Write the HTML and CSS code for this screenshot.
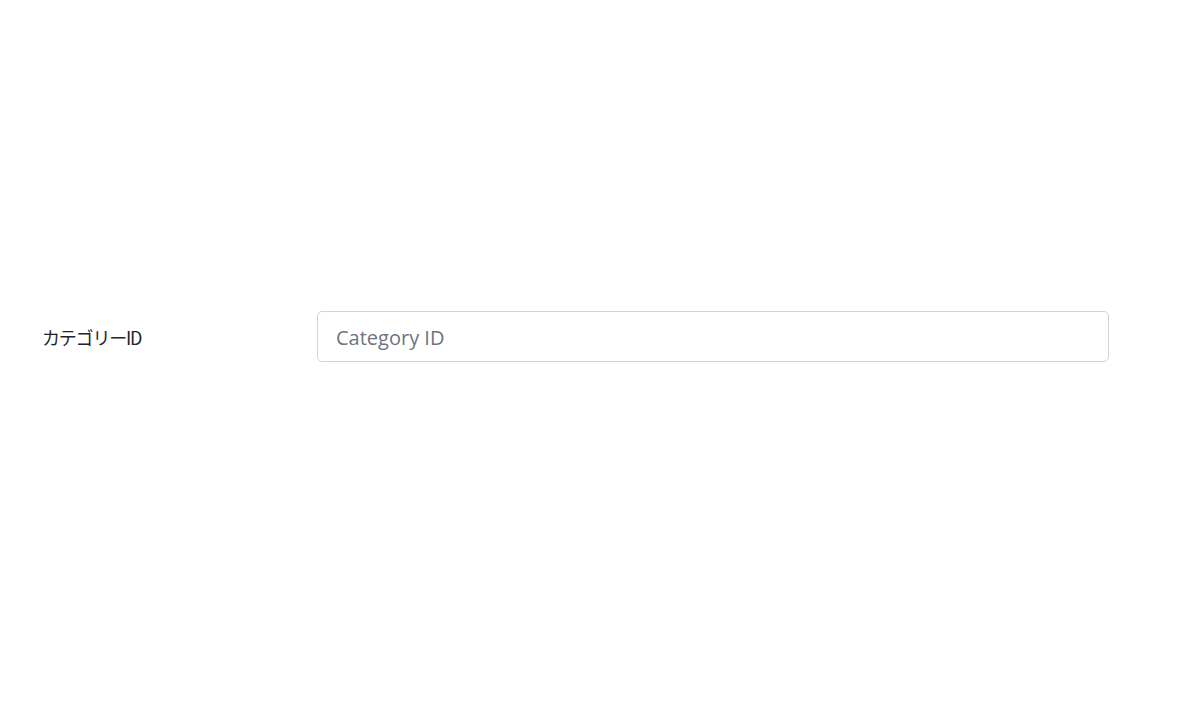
FILE: index.html
```html
<!DOCTYPE html>
<html lang="ja">
<head>
<meta charset="utf-8">
<link rel="stylesheet" href="styles.css">
</head>
<body>
<div class="page">
  <div class="form-row">
    <label class="form-label" for="cat">カテゴリーID</label>
    <input class="form-input" id="cat" type="text" placeholder="Category ID">
  </div>
</div>
</body>
</html>
```
FILE: styles.css
```css
html, body {
  margin: 0;
  padding: 0;
  background: #ffffff;
}
.page {
  width: 1200px;
  height: 720px;
  display: flex;
  flex-direction: column;
  justify-content: flex-start;
  padding-top: 311px;
  box-sizing: border-box;
}
.form-row {
  display: flex;
  align-items: center;
  padding-left: 42px;
}
.form-label {
  width: 275px;
  font-family: "Noto Sans CJK JP", "Noto Sans", sans-serif;
  font-size: 18px;
  color: #212529;
  letter-spacing: -1.2px;
  padding-top: 1px;
}
.form-input {
  width: 792px;
  height: 51px;
  box-sizing: border-box;
  border: 1px solid #ced4da;
  border-radius: 5px;
  padding: 2px 18px 0 18px;
  font-family: "Open Sans", "Noto Sans", sans-serif;
  font-size: 20px;
  color: #495057;
  background: #fff;
  outline: none;
}
.form-input::placeholder {
  color: #6c757d;
}
```
